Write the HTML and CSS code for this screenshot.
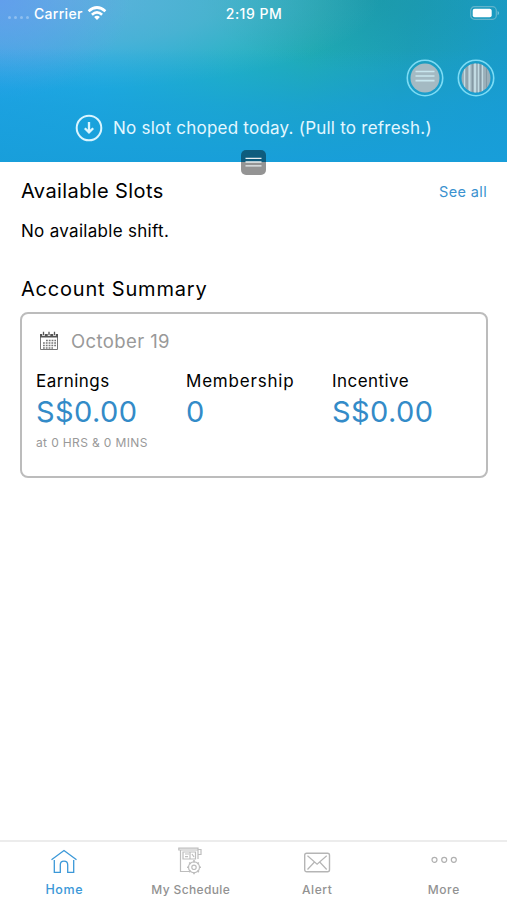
FILE: index.html
```html
<!DOCTYPE html>
<html lang="en">
<head>
<meta charset="utf-8">
<title>Home</title>
<link rel="stylesheet" href="styles.css">
</head>
<body>
<div class="app">
  <header class="hero">
    <div class="status">
      <div class="carrier">
        <span class="signal"><i></i><i></i><i></i><i></i></span>
        <span class="carrier-name">Carrier</span>
        <svg class="wifi" width="20" height="15" viewBox="0 0 20 15" fill="none" stroke="#fff" stroke-width="2.700"><path d="M1.600 5.200Q10-2.200 18.400 5.200M4.900 8.700Q10 4.200 15.100 8.700"/><path d="M10 14l-2.900-3q2.900-2.300 5.800 0z" fill="#fff" stroke="none"/></svg>
      </div>
      <span class="clock">2:19 PM</span>
      <svg class="battery" width="30" height="14" viewBox="0 0 30 14"><rect x=".7" y=".7" width="25.600" height="12.600" rx="3.800" fill="none" stroke="#62b4cc" stroke-width="1.200"/><rect x="2.700" y="2.700" width="19" height="8.600" rx="2" fill="#fff"/><path d="M27.600 4.700q3 2.300 0 4.600z" fill="#72c4dc"/></svg>
    </div>
    <div class="actions">
      <svg width="38" height="38" viewBox="0 0 38 38"><circle cx="19" cy="19" r="17.700" fill="none" stroke="#7ddcf5" stroke-width="1.600"/><circle cx="19" cy="19" r="14.500" fill="#a4bac3"/><path d="M9.500 12.500h19M9.500 17h19M9.500 21.700h19" stroke="#c9e7ef" stroke-width="1.700"/></svg>
      <svg width="38" height="38" viewBox="0 0 38 38"><defs><clipPath id="disc"><circle cx="19" cy="19" r="14.500"/></clipPath></defs><circle cx="19" cy="19" r="17.700" fill="none" stroke="#7ddcf5" stroke-width="1.600"/><g clip-path="url(#disc)"><path fill="#9aafb9" d="M4 4h30v30H4z"/><path d="M7.500 4v30M21.500 4v30M25.500 4v30" stroke="#c2dbe3" stroke-width="1.200"/><path d="M12.500 4v30M18 4v30" stroke="#c2dbe3" stroke-width="2"/><path d="M10 4v30M15.500 4v30M23.500 4v30M29.500 4v30" stroke="#8499a4"/></g></svg>
    </div>
    <div class="refresh">
      <svg width="28" height="28" viewBox="0 0 28 28" fill="none" stroke="#d9f5ff" stroke-width="2"><circle cx="14" cy="14" r="12.300"/><path d="M14 8v10M9.800 14.200l4.200 4.200 4.200-4.200" stroke-width="2.300"/></svg>
      <span class="refresh-text">No slot choped today. (Pull to refresh.)</span>
    </div>
    <svg class="handle" width="25" height="25" viewBox="0 0 25 25"><rect width="25" height="25" rx="5" fill="#000" fill-opacity=".42"/><path d="M4.500 8.300h16M4.500 12h16M4.500 15.800h16" stroke="#e8eef0" stroke-width="1.300"/></svg>
  </header>
  <main class="content">
    <div class="section-head"><h2 class="slots">Available Slots</h2><a class="see-all">See all</a></div>
    <p class="empty">No available shift.</p>
    <h2 class="account">Account Summary</h2>
    <section class="card">
      <div class="month">
        <svg width="20" height="20" viewBox="0 0 20 20" fill="none" stroke="#555"><path d="M1.500 3.500h17v15h-17z" stroke="#777"/><path d="M1 3h18v3.500H1z" fill="#555" stroke="none"/><path d="M4.500 1v4M10 1v4M15.500 1v4" stroke="#fff" stroke-width="2.500"/><path d="M4.500.7v3.600M10 .7v3.600M15.500.7v3.600" stroke-width="1.300"/><path d="M7 9.500h10M4 12h13M4 14.500h13M4 17h10" stroke="#777" stroke-width="1.500" stroke-dasharray="1.800 1"/></svg>
        <span class="month-name">October 19</span>
      </div>
      <div class="stats">
        <div><div class="label earnings">Earnings</div><div class="value">S$0.00</div><div class="note">at 0 HRS &amp; 0 MINS</div></div>
        <div><div class="label membership">Membership</div><div class="value">0</div></div>
        <div><div class="label incentive">Incentive</div><div class="value">S$0.00</div></div>
      </div>
    </section>
  </main>
  <nav class="tabs">
    <a class="tab active"><svg width="28" height="28" viewBox="0 0 28 28" fill="none" stroke="currentColor" stroke-width="1.300"><path d="M1.500 12.800L14 3.500l12.500 9.300M4.300 13v12.300h6v-7.500q0-3.600 3.700-3.600t3.700 3.600v7.500h6V13"/></svg><span class="t-home">Home</span></a>
    <a class="tab"><svg width="28" height="28" viewBox="0 0 28 28" fill="none" stroke="#bdbdbd" stroke-width="1.200"><path d="M12 24.500H3.500V3H1.800V1.200H21V12M4 3h17M21 2.500h3v5h-3M6 5h12.500v7H6zM8 7h4M8 9.700h3M13 5.500v6M15 7l2 3"/><circle cx="17" cy="20.300" r="5.500"/><circle cx="17" cy="20.300" r="2.200"/><path d="M17 13v2.500M17 25v2.300M10 20.300h2M22 20.300h2M12.200 15.500l1.500 1.500M21.800 15.500l-1.500 1.500M12.200 25.100l1.500-1.500M21.800 25.100l-1.500-1.500" stroke-width="1.600"/></svg><span class="t-schedule">My Schedule</span></a>
    <a class="tab"><svg width="28" height="28" viewBox="0 0 28 28" fill="none" stroke="#b5b5b5" stroke-width="1.400"><rect x="1.700" y="6.200" width="24.800" height="18.600" rx="2"/><path d="M4.500 8.700l9.600 8.500 9.600-8.500M4.500 22.500l7-7.500M23.700 22.500l-7-7.500" stroke-width="1.200"/></svg><span class="t-alert">Alert</span></a>
    <a class="tab"><svg width="28" height="28" viewBox="0 0 28 28" fill="none" stroke="#b0b0b0" stroke-width="1.200"><circle cx="4.500" cy="12.800" r="2.500"/><circle cx="14.200" cy="12.800" r="2.500"/><circle cx="23.800" cy="12.800" r="2.500"/></svg><span class="t-more">More</span></a>
  </nav>
</div>
</body>
</html>
```
FILE: styles.css
```css
* { box-sizing: border-box; }
body { margin: 0; font-family: Inter, "Liberation Sans", sans-serif; background: #fff; color: #111; }
h2, p { margin: 0; font-weight: 400; }
svg { display: block; flex: none; }
span, h2, p, a, .label, .value, .note { white-space: nowrap; }
.app { width: 507px; height: 900px; display: flex; flex-direction: column; overflow: hidden; }
.hero {
  position: relative; height: 162px; flex: none; color: #fff;
  background:
    linear-gradient(180deg, rgba(24,158,218,0) 30%, rgba(24,158,218,.65) 65%, rgba(24,158,218,.97) 100%),
    radial-gradient(ellipse 130px 100px at 0 0, rgba(100,155,240,.8) 0%, rgba(100,155,240,0) 100%),
    radial-gradient(ellipse 320px 90px at 60px 0, rgba(115,180,215,.75) 0%, rgba(105,180,210,.55) 50%, rgba(90,175,195,0) 100%),
    radial-gradient(ellipse 170px 70px at 370px 0, rgba(25,140,155,.4) 0%, rgba(25,140,155,0) 100%),
    linear-gradient(100deg, #22a5ec 0%, #20aee2 22%, #20b2c4 45%, #20acb4 60%, #1c9fb9 78%, #189aca 100%);
}
.status { height: 26px; display: grid; grid-template-columns: 1fr auto 1fr; align-items: center; padding: 0 7px 0 8px; font-size: 14px; font-weight: 500; }
.carrier { display: flex; align-items: center; }
.signal { display: flex; gap: 3px; width: 26px; padding-top: 8px; }
.signal i { width: 3px; height: 3px; border-radius: 50%; background: rgba(255,255,255,.3); }
.carrier-name { letter-spacing: .3px; }
.wifi { margin-left: 4px; }
.battery { justify-self: end; }
.clock { letter-spacing: .5px; }
.actions { display: flex; justify-content: flex-end; gap: 13px; margin-top: 33px; padding-right: 12px; }
.refresh { display: flex; align-items: center; gap: 10px; margin-top: 17px; padding-left: 75px; color: #e3f7ff; font-size: 17px; letter-spacing: .23px; }
.handle { position: absolute; left: 241px; top: 150px; }
.content { flex: 1; padding: 17px 19px 0 20px; }
.section-head { display: flex; justify-content: space-between; align-items: center; height: 24px; }
h2 { font-size: 20px; line-height: 24px; padding-left: 1px; color: #000; }
.slots { letter-spacing: .4px; }
.see-all { color: #3b92cf; font-size: 14.500px; letter-spacing: .35px; padding-right: 1px; }
.empty { font-size: 17px; line-height: 24px; margin-top: 16px; padding-left: 1px; letter-spacing: .3px; color: #000; }
.account { margin-top: 34px; letter-spacing: .8px; }
.card { height: 166px; margin-top: 11px; border: 2px solid #bcbcbc; border-radius: 8px; padding: 14px; }
.month { display: flex; align-items: center; height: 25px; gap: 12px; padding-left: 3px; color: #999; font-size: 18.500px; letter-spacing: .4px; }
.stats { display: grid; grid-template-columns: 150px 146px 1fr; margin-top: 17px; }
.label { font-size: 17px; line-height: 22px; color: #000; }
.earnings { letter-spacing: .45px; }
.membership { letter-spacing: .8px; }
.incentive { letter-spacing: .45px; }
.value { font-size: 29px; line-height: 40px; color: #338bc8; letter-spacing: .4px; }
.note { font-size: 12px; line-height: 22px; color: #999; letter-spacing: .37px; }
.tabs { height: 60px; border-top: 2px solid #ececec; display: grid; grid-template-columns: repeat(4, 1fr); padding-left: 1px; }
.tab { display: flex; flex-direction: column; align-items: center; padding-top: 5px; font-size: 12px; font-weight: 500; line-height: 16px; color: #929292; }
.tab span { margin-top: 7px; }
.t-home { font-size: 12.500px; letter-spacing: .6px; }
.t-schedule { letter-spacing: .37px; }
.t-alert, .t-more { letter-spacing: .6px; }
.active { color: #3b98d8; }
```
